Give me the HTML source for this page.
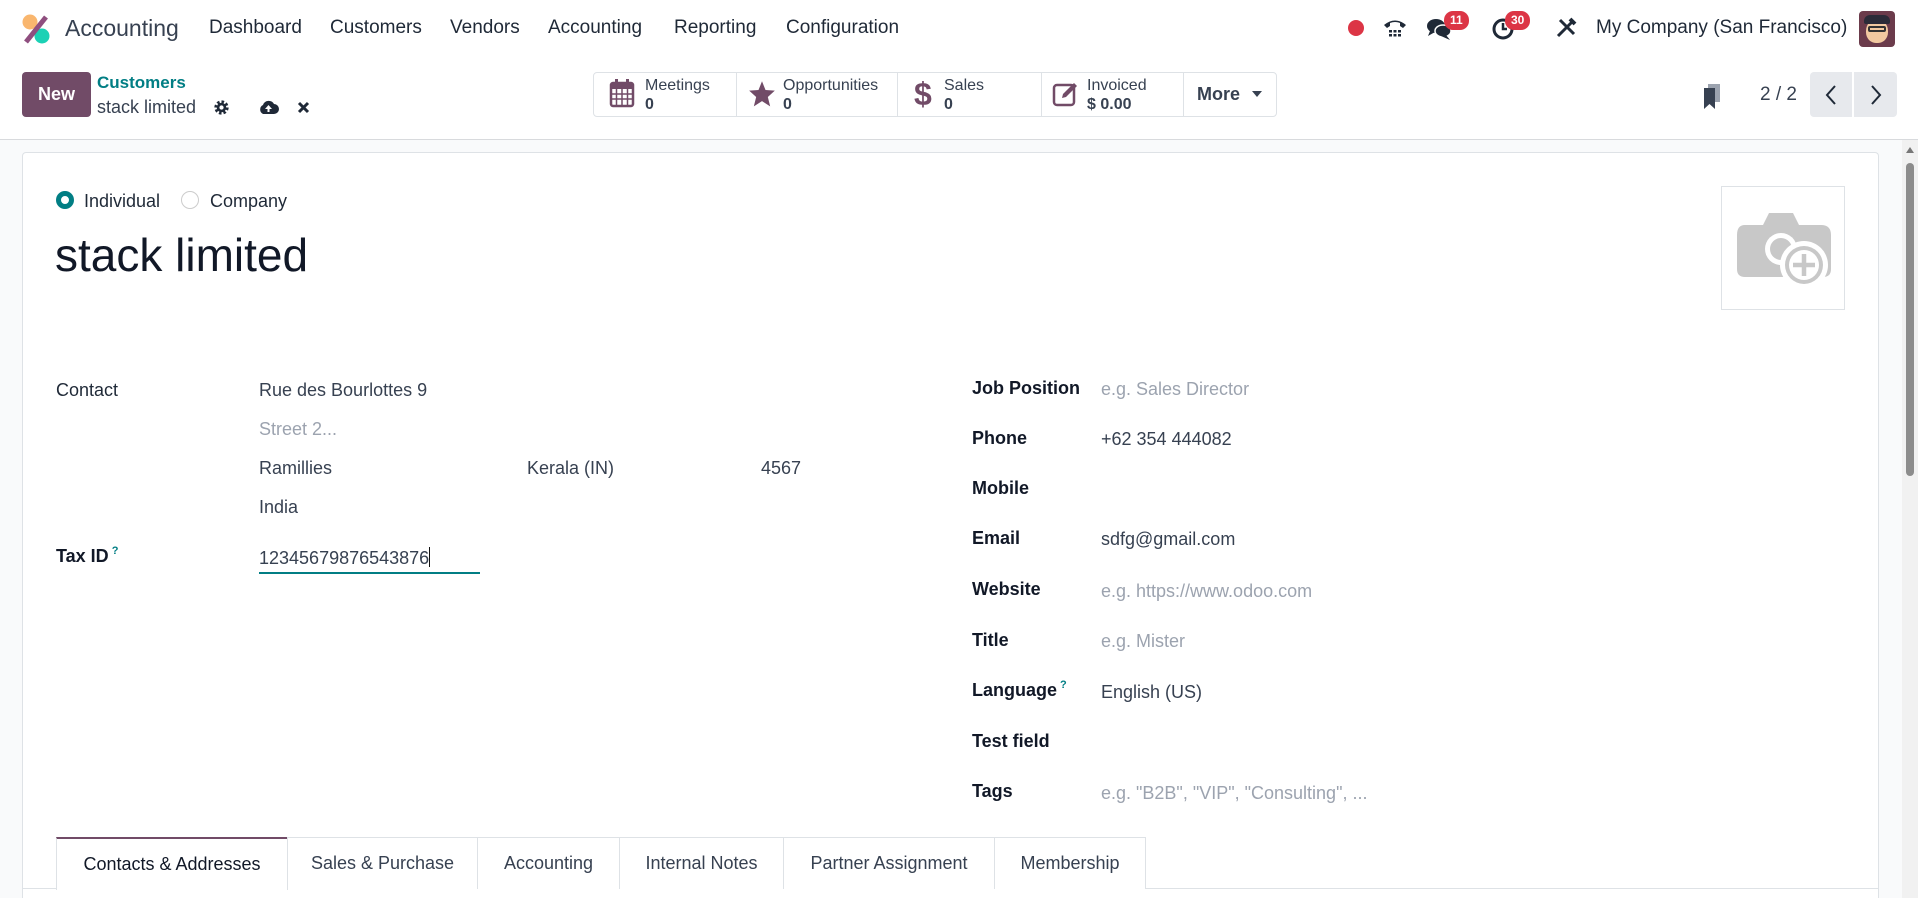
<!DOCTYPE html>
<html><head><meta charset="utf-8"><style>
*{box-sizing:border-box;margin:0;padding:0}
html,body{width:1918px;height:898px;overflow:hidden}
body{background:#fff;font-family:"Liberation Sans",sans-serif;color:#374151;position:relative}
.a{position:absolute;white-space:nowrap}
.menu{font-size:19px;color:#1f2937;top:17px}
.f{font-size:18px;line-height:22px}
.lb{font-weight:bold;color:#111827}
.ph{color:#9ca3af}
.q{font-size:11px;color:#017e84;font-weight:bold;position:relative;top:-8px;margin-left:3px}
.stat{position:absolute;top:72px;height:45px;border:1px solid #dee2e6;background:#fff}
.sl{font-size:16px;line-height:18px;color:#374151}
.sv{font-size:16px;line-height:18px;font-weight:bold;color:#374151}
.tab{position:absolute;top:837px;height:52px;border:1px solid #dee2e6;border-bottom:none;font-size:18px;line-height:50px;text-align:center;color:#374151;background:#fff}
.badge{position:absolute;background:#dc3545;color:#fff;font-size:12px;font-weight:bold;border-radius:9px;height:19px;line-height:19px;padding:0 6px}
</style></head><body>
<svg class="a" style="left:20px;top:12px" width="32" height="34" viewBox="0 0 32 34"><circle cx="10" cy="10" r="7.5" fill="#f9b66e"/><circle cx="22" cy="24" r="7.5" fill="#1bd1b5"/><line x1="26" y1="5" x2="6" y2="30" stroke="#8f4e7f" stroke-width="5"/></svg>
<div class="a" style="left:65px;top:15px;font-size:23px;color:#374151">Accounting</div>
<div class="a menu" style="left:209px">Dashboard</div>
<div class="a menu" style="left:330px">Customers</div>
<div class="a menu" style="left:450px">Vendors</div>
<div class="a menu" style="left:548px">Accounting</div>
<div class="a menu" style="left:674px">Reporting</div>
<div class="a menu" style="left:786px">Configuration</div>
<div class="a" style="left:1348px;top:20px;width:16px;height:16px;border-radius:50%;background:#dc3545"></div>
<svg class="a" style="left:1382px;top:16px" width="26" height="24" viewBox="0 0 26 24"><path d="M2 9 Q13 0 24 9 L21 12 L18 10 L18 7 Q13 5 8 7 L8 10 L5 12 Z" fill="#1f2937"/><g fill="#1f2937"><rect x="7" y="14" width="3" height="2.5"/><rect x="11.5" y="14" width="3" height="2.5"/><rect x="16" y="14" width="3" height="2.5"/><rect x="7" y="18" width="3" height="2.5"/><rect x="11.5" y="18" width="3" height="2.5"/><rect x="16" y="18" width="3" height="2.5"/></g></svg>
<svg class="a" style="left:1426px;top:16px" width="28" height="26" viewBox="0 0 28 26"><ellipse cx="10" cy="10" rx="9" ry="7" fill="#1f2937"/><path d="M4 15 L2 20 L9 16Z" fill="#1f2937"/><ellipse cx="17" cy="15" rx="8" ry="6" fill="#1f2937" stroke="#fff" stroke-width="1.5"/><path d="M20 19 L24 24 L15 20Z" fill="#1f2937"/></svg>
<div class="badge" style="left:1444px;top:11px">11</div>
<svg class="a" style="left:1491px;top:17px" width="24" height="24" viewBox="0 0 24 24"><circle cx="12" cy="12" r="9" fill="none" stroke="#1f2937" stroke-width="3"/><path d="M12 6 V12 H16" fill="none" stroke="#1f2937" stroke-width="2.5"/></svg>
<div class="badge" style="left:1505px;top:11px">30</div>
<svg class="a" style="left:1555px;top:17px" width="22" height="22" viewBox="0 0 22 22"><path d="M3 19 L17 5 M5 3 L19 17" stroke="#1f2937" stroke-width="3"/><path d="M15 2 L20 7" stroke="#1f2937" stroke-width="4"/></svg>
<div class="a" style="left:1596px;top:17px;font-size:19px;color:#1f2937">My Company (San Francisco)</div>
<div class="a" style="left:1859px;top:11px;width:36px;height:36px;border-radius:4px;background:#6b3b4b;overflow:hidden"><div style="position:absolute;left:7px;top:8px;width:22px;height:24px;border-radius:50% 50% 45% 45%;background:#f2c9a0"></div><div style="position:absolute;left:5px;top:4px;width:26px;height:9px;border-radius:6px 6px 2px 2px;background:#2b2b38"></div><div style="position:absolute;left:9px;top:15px;width:18px;height:6px;border:2px solid #333;border-radius:2px"></div></div>
<div class="a" style="left:22px;top:72px;width:69px;height:45px;background:#714B67;border-radius:4px;color:#fff;font-weight:bold;font-size:18px;line-height:45px;text-align:center">New</div>
<div class="a" style="left:97px;top:73px;font-size:17px;font-weight:bold;color:#017e84">Customers</div>
<div class="a" style="left:97px;top:97px;font-size:18px;color:#374151">stack limited</div>
<svg class="a" style="left:213px;top:99px" width="17" height="17" viewBox="0 0 16 16"><circle cx="8" cy="8" r="5" fill="none" stroke="#1f2937" stroke-width="3.5" stroke-dasharray="2.2 1.7"/><circle cx="8" cy="8" r="4.5" fill="#1f2937"/><circle cx="8" cy="8" r="2" fill="#fff"/></svg>
<svg class="a" style="left:258px;top:99px" width="21" height="16" viewBox="0 0 21 16"><path d="M5 15 A5 5 0 0 1 5 6 A6 6 0 0 1 16 5 A5 5 0 0 1 16 15Z" fill="#1f2937"/><path d="M10.5 6 L7 10 H9.5 V13 H11.5 V10 H14Z" fill="#fff"/></svg>
<svg class="a" style="left:297px;top:101px" width="13" height="13" viewBox="0 0 13 13"><path d="M2 2 L11 11 M11 2 L2 11" stroke="#1f2937" stroke-width="3"/></svg>
<div class="stat" style="left:593px;width:144px;border-radius:4px 0 0 4px"></div>
<div class="stat" style="left:736px;width:162px"></div>
<div class="stat" style="left:897px;width:145px"></div>
<div class="stat" style="left:1041px;width:143px"></div>
<div class="stat" style="left:1183px;width:94px;border-radius:0 4px 4px 0"></div>
<svg class="a" style="left:609px;top:78px" width="26" height="30" viewBox="0 0 26 30"><rect x="2" y="5" width="22" height="23" rx="2" fill="none" stroke="#714B67" stroke-width="2.5"/><rect x="2" y="5" width="22" height="6" fill="#714B67"/><rect x="6" y="1" width="3" height="7" fill="#714B67"/><rect x="17" y="1" width="3" height="7" fill="#714B67"/><path d="M2 16 H24 M2 21 H24 M7.5 11 V28 M13 11 V28 M18.5 11 V28" stroke="#714B67" stroke-width="1.5"/></svg>
<div class="a sl" style="left:645px;top:77px">Meetings</div><div class="a sv" style="left:645px;top:96px">0</div>
<svg class="a" style="left:748px;top:80px" width="28" height="27" viewBox="0 0 24 23"><path d="M12 1 L15 8.5 L23 9 L17 14.5 L19 22.5 L12 18 L5 22.5 L7 14.5 L1 9 L9 8.5Z" fill="#714B67"/></svg>
<div class="a sl" style="left:783px;top:77px">Opportunities</div><div class="a sv" style="left:783px;top:96px">0</div>
<div class="a" style="left:914px;top:76px;font-size:32px;font-weight:bold;color:#714B67">$</div>
<div class="a sl" style="left:944px;top:77px">Sales</div><div class="a sv" style="left:944px;top:96px">0</div>
<svg class="a" style="left:1052px;top:80px" width="28" height="27" viewBox="0 0 28 27"><rect x="2" y="5" width="20" height="20" rx="3" fill="none" stroke="#714B67" stroke-width="2.5"/><path d="M10 18 L11 14 L22 3 L25 6 L14 17Z" fill="#714B67"/></svg>
<div class="a sl" style="left:1087px;top:77px">Invoiced</div><div class="a sv" style="left:1087px;top:96px">$ 0.00</div>
<div class="a" style="left:1197px;top:84px;font-size:18px;font-weight:bold;color:#374151">More</div>
<div class="a" style="left:1252px;top:91px;border-left:5px solid transparent;border-right:5px solid transparent;border-top:6px solid #374151"></div>
<svg class="a" style="left:1702px;top:82px" width="20" height="28" viewBox="0 0 20 28"><rect x="6" y="2" width="12" height="18" fill="#9ca3af"/><path d="M2 6 H13 V27 L7.5 22 L2 27Z" fill="#374151"/></svg>
<div class="a" style="left:1760px;top:84px;font-size:19px;color:#374151">2 / 2</div>
<div class="a" style="left:1810px;top:72px;width:42px;height:45px;background:#e7e9ed;border-radius:4px 0 0 4px"></div>
<div class="a" style="left:1854px;top:72px;width:43px;height:45px;background:#e7e9ed;border-radius:0 4px 4px 0"></div>
<svg class="a" style="left:1824px;top:84px" width="14" height="22" viewBox="0 0 14 22"><path d="M11 2 L3 11 L11 20" fill="none" stroke="#1f2937" stroke-width="2"/></svg>
<svg class="a" style="left:1869px;top:84px" width="14" height="22" viewBox="0 0 14 22"><path d="M3 2 L11 11 L3 20" fill="none" stroke="#1f2937" stroke-width="2"/></svg>
<div class="a" style="left:0;top:139px;width:1918px;height:759px;background:#f9fafb;border-top:1px solid #d8dadd"></div>
<div class="a" style="left:22px;top:152px;width:1857px;height:746px;background:#fff;border:1px solid #dee2e6;border-bottom:none;border-radius:4px 4px 0 0"></div>
<div class="a" style="left:1902px;top:140px;width:16px;height:758px;background:#f1f1f1"></div>
<div class="a" style="left:1906px;top:147px;border-left:4px solid transparent;border-right:4px solid transparent;border-bottom:6px solid #777"></div>
<div class="a" style="left:1906px;top:163px;width:8px;height:313px;background:#8c8c8c;border-radius:4px"></div>
<div class="a" style="left:56px;top:191px;width:18px;height:18px;border-radius:50%;border:5px solid #017e84;background:#fff"></div>
<div class="a f" style="left:84px;top:190px;color:#1f2937">Individual</div>
<div class="a" style="left:181px;top:191px;width:18px;height:18px;border-radius:50%;border:1px solid #ccc"></div>
<div class="a f" style="left:210px;top:190px;color:#1f2937">Company</div>
<div class="a" style="left:55px;top:228px;font-size:46px;color:#111827">stack limited</div>
<div class="a" style="left:1721px;top:186px;width:124px;height:124px;border:1px solid #dee2e6"></div>
<svg class="a" style="left:1735px;top:207px" width="98" height="88" viewBox="0 0 98 88"><path d="M10 18 H28 L34 6 H58 L64 18 H86 Q96 18 96 28 V62 Q96 70 88 70 H10 Q2 70 2 62 V28 Q2 18 10 18Z" fill="#c8c8c8"/><circle cx="46" cy="42" r="16" fill="#fff"/><circle cx="46" cy="42" r="11" fill="#c8c8c8"/><circle cx="69" cy="58" r="24" fill="#fff"/><circle cx="69" cy="58" r="19" fill="#c8c8c8"/><circle cx="69" cy="58" r="15" fill="#fff"/><path d="M69 47 V69 M58 58 H80" stroke="#c8c8c8" stroke-width="4.5"/></svg>
<div class="a f" style="left:56px;top:379px;color:#1f2937">Contact</div>
<div class="a f" style="left:259px;top:379px">Rue des Bourlottes 9</div>
<div class="a f ph" style="left:259px;top:418px">Street 2...</div>
<div class="a f" style="left:259px;top:457px">Ramillies</div>
<div class="a f" style="left:527px;top:457px">Kerala (IN)</div>
<div class="a f" style="left:761px;top:457px">4567</div>
<div class="a f" style="left:259px;top:496px">India</div>
<div class="a f lb" style="left:56px;top:545px">Tax ID<span class="q">?</span></div>
<div class="a f" style="left:259px;top:547px">12345679876543876<span style="display:inline-block;width:1px;height:20px;background:#111;vertical-align:-3px"></span></div>
<div class="a" style="left:259px;top:572px;width:221px;height:2px;background:#017e84"></div>
<div class="a f lb" style="left:972px;top:377px">Job Position</div><div class="a f ph" style="left:1101px;top:378px">e.g. Sales Director</div>
<div class="a f lb" style="left:972px;top:427px">Phone</div><div class="a f" style="left:1101px;top:428px">+62 354 444082</div>
<div class="a f lb" style="left:972px;top:477px">Mobile</div>
<div class="a f lb" style="left:972px;top:527px">Email</div><div class="a f" style="left:1101px;top:528px">sdfg@gmail.com</div>
<div class="a f lb" style="left:972px;top:578px">Website</div><div class="a f ph" style="left:1101px;top:580px">e.g. https://www.odoo.com</div>
<div class="a f lb" style="left:972px;top:629px">Title</div><div class="a f ph" style="left:1101px;top:630px">e.g. Mister</div>
<div class="a f lb" style="left:972px;top:679px">Language<span class="q">?</span></div><div class="a f" style="left:1101px;top:681px">English (US)</div>
<div class="a f lb" style="left:972px;top:730px">Test field</div>
<div class="a f lb" style="left:972px;top:780px">Tags</div><div class="a f ph" style="left:1101px;top:782px">e.g. "B2B", "VIP", "Consulting", ...</div>
<div class="a" style="left:23px;top:888px;width:1855px;height:1px;background:#dee2e6"></div>
<div class="tab" style="left:56px;width:232px;border-top:2px solid #714B67;height:53px;color:#111827">Contacts &amp; Addresses</div>
<div class="tab" style="left:287px;width:191px">Sales &amp; Purchase</div>
<div class="tab" style="left:477px;width:143px">Accounting</div>
<div class="tab" style="left:619px;width:165px">Internal Notes</div>
<div class="tab" style="left:783px;width:212px">Partner Assignment</div>
<div class="tab" style="left:994px;width:152px">Membership</div>
</body></html>
